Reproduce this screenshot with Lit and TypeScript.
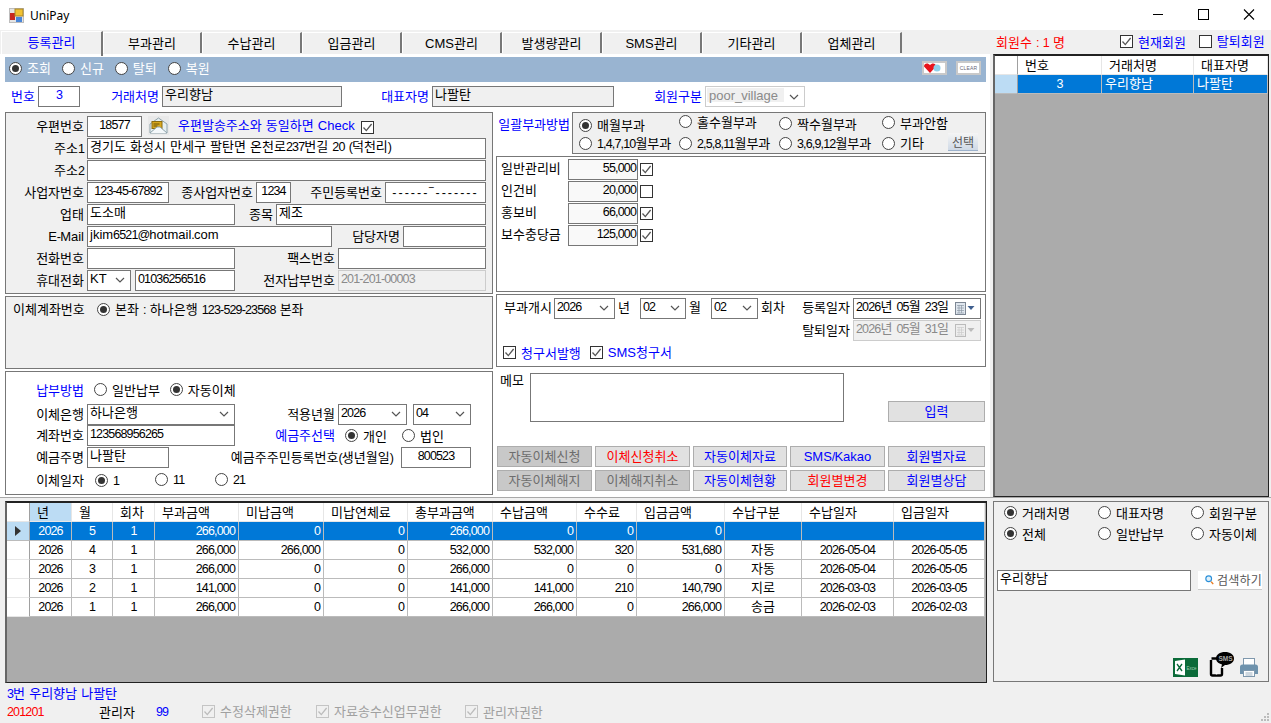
import { LitElement, html, css, svg } from 'lit';
import { customElement } from 'lit/decorators.js';

// hangul stays in the base font, digits and latin get their own run so widths follow the bitmap font of the original
const t = (s: string) => {
  const parts = s.match(/[\uAC00-\uD7A3]+|[A-Za-z]+|[^\uAC00-\uD7A3A-Za-z]+/g) || [];
  return parts.map(p => {
    if (/^[\uAC00-\uD7A3]/.test(p)) return html`${p}`;
    if (/^[A-Za-z]/.test(p)) return html`<span class="l">${p}</span>`;
    return html`<span class="n">${p}</span>`;
  });
};

const radio = (label: string, on = false, cls = '') => html`
  <span class="ra ${cls}"><i class="dot ${on ? 'on' : ''}"></i><span>${t(label)}</span></span>`;

const tick = svg`<svg width="11" height="11" viewBox="0 0 11 11"><path d="M1.5 5.5 4.3 8.6 9.6 2" fill="none" stroke="currentColor" stroke-width="1.3"/></svg>`;

const check = (label: string, on = true, cls = '') => html`
  <span class="cb ${cls}"><i class="box">${on ? tick : ''}</i>${label ? html`<span>${t(label)}</span>` : ''}</span>`;

const chevron = svg`<svg class="chev" width="10" height="6" viewBox="0 0 10 6"><path d="M1 1 5 5 9 1" fill="none" stroke="#555" stroke-width="1.2"/></svg>`;

const field = (v = '', cls = '') => html`<div class="in ${cls}">${t(v)}</div>`;
const sel = (v = '', cls = '') => html`<div class="in sel ${cls}"><span>${t(v)}</span>${chevron}</div>`;
const lab = (v: string, cls = '') => html`<div class="lb ${cls}">${t(v)}</div>`;

const calendar = (off = false) => svg`<svg class="cal" width="20" height="13" viewBox="0 0 20 13">
  <rect x="0.5" y="0.5" width="10" height="12" fill="${off ? '#eee' : '#dfe6ee'}" stroke="${off ? '#bbb' : '#7d8794'}"/>
  <path d="M2 3.5h7M2 6h7M2 8.500h7M2 11h7M4 3v8M6.500 3v8" stroke="${off ? '#ccc' : '#8e99a6'}" stroke-width=".7"/>
  <path d="M12.500 4h7l-3.500 4z" fill="${off ? '#bbb' : '#3f5f8f'}"/></svg>`;

const TABS = ['등록관리', '부과관리', '수납관리', '입금관리', 'CMS관리', '발생량관리', 'SMS관리', '기타관리', '업체관리'];
const FEES: [string, string, boolean][] = [
  ['일반관리비', '55,000', true],
  ['인건비', '20,000', false],
  ['홍보비', '66,000', true],
  ['보수충당금', '125,000', true],
];
const BUTTONS = [
  ['자동이체신청', 'off'], ['이체신청취소', 'red'], ['자동이체자료', ''], ['SMS/Kakao', ''], ['회원별자료', ''],
  ['자동이체해지', 'off'], ['이체해지취소', 'off'], ['자동이체현황', ''], ['회원별변경', 'red'], ['회원별상담', ''],
];
const HEAD = ['년', '월', '회차', '부과금액', '미납금액', '미납연체료', '총부과금액', '수납금액', '수수료', '입금금액', '수납구분', '수납일자', '입금일자'];
const ROWS = [
  ['2026', '5', '1', '266,000', '0', '0', '266,000', '0', '0', '0', '', '', ''],
  ['2026', '4', '1', '266,000', '266,000', '0', '532,000', '532,000', '320', '531,680', '자동', '2026-05-04', '2026-05-05'],
  ['2026', '3', '1', '266,000', '0', '0', '266,000', '0', '0', '0', '자동', '2026-05-04', '2026-05-05'],
  ['2026', '2', '1', '141,000', '0', '0', '141,000', '141,000', '210', '140,790', '지로', '2026-03-03', '2026-03-05'],
  ['2026', '1', '1', '266,000', '0', '0', '266,000', '266,000', '0', '266,000', '송금', '2026-02-03', '2026-02-03'],
];
const CENTERED = [0, 1, 2, 10, 11, 12];

@customElement('app-root')
export class AppRoot extends LitElement {
  static styles = css`
    :host {
      display: block;
      position: relative;
      width: 1271px;
      height: 723px;
      overflow: hidden;
      background: #f0f0f0;
      color: #000;
      font: 13px/18px "Noto Sans CJK KR", sans-serif;
      white-space: nowrap;
      word-spacing: 1.5px;
    }
    i { display: block; font-style: normal; }
    .n { font-family: "Liberation Sans", sans-serif; font-size: 12.5px; letter-spacing: -0.85px; }
    .l { font-family: "Liberation Sans", sans-serif; font-size: 13px; }
    .blue { color: #0000ff; }
    .red { color: #ff0000; }

    /* title bar */
    .title { height: 30px; background: #fff; display: flex; align-items: center; padding-left: 9px; }
    .title .name { font: 12px "Noto Sans", sans-serif; margin-left: 6px; }
    .winbtns { margin-left: auto; display: flex; }
    .winbtns svg { display: block; width: 45px; height: 30px; }

    /* tabs */
    .tabbar { height: 24px; display: flex; padding-left: 1px; position: relative; }
    .tab {
      width: 100px; height: 21px; margin-top: 2px; box-sizing: border-box;
      border-top: 1px solid #fff; border-left: 1px solid #fff; border-right: 2px solid #777;
      text-align: center; line-height: 20px;
    }
    .tab.first { width: 102px; height: 25px; margin-top: 1px; color: #0000ff; z-index: 1; }
    .tab.second { width: 99px; }
    .members { margin-left: 94px; display: flex; align-items: center; height: 24px; }
    .members .cnt { width: 124px; }
    .members .gone { margin-left: 13px; }

    .main { display: flex; height: 443px; }
    .page { width: 990px; box-sizing: border-box; background: #fff; padding: 3px 0 0 5px; }

    .modebar { width: 981px; height: 25px; background: #99b4d1; color: #fff; display: flex; align-items: center; padding: 0 0 3px 4px; box-sizing: border-box; }
    .modebar .ra { margin-right: 11px; }
    .modebar .imgs { margin-left: auto; display: flex; gap: 9px; padding-right: 5px; }
    .imgbtn { width: 25px; height: 14px; box-sizing: border-box; border: 2px solid #c9c9c9; background: #fff; display: grid; place-items: center; }
    .imgbtn span { font: 5px "Liberation Sans", sans-serif; color: #667; word-spacing: 0; letter-spacing: .2px; }

    .in {
      box-sizing: border-box; height: 21px; border: 1px solid #777; background: #fff;
      padding: 0 2px; line-height: 14px;
    }
    .in.gray { background: #f0f0f0; }
    .in.soft { background: #f9f9f9; }
    .in.off { background: #f0f0f0; border-color: #ccc; color: #8a8a8a; }
    .in.ctr { text-align: center; }
    .in.rt { text-align: right; padding-right: 1px; }
    .in.dash { line-height: 17px; }
    .in.dash .n { letter-spacing: 2px; }
    .sel { display: flex; justify-content: space-between; align-items: flex-start; padding-right: 5px; }
    .chev { margin-top: 6px; flex: none; }
    .sel.pv { color: #8a8a8a; background: #fff; border-color: #ccc; padding: 1px 5px 0 1px; }
    .sel.pv > span { background: #f0f0f0; width: 77px; padding-left: 2px; height: 14px; line-height: 13px; box-sizing: border-box; }

    .lb { text-align: right; padding-right: 3px; line-height: 19px; }
    .lb.pad8 { padding-right: 8px; }

    .ra, .cb { display: inline-flex; align-items: center; gap: 5px; line-height: 18px; }
    .dot {
      width: 13px; height: 13px; box-sizing: border-box; border: 1px solid #444; border-radius: 50%;
      background: #fff; display: grid; place-items: center; flex: none;
    }
    .dot.on::after { content: ''; width: 7px; height: 7px; border-radius: 50%; background: #333; }
    .box {
      width: 13px; height: 13px; box-sizing: border-box; border: 1px solid #333; background: #fff;
      color: #555; display: grid; place-items: center; flex: none;
    }
    .box svg { display: block; }
    .cb.dis { color: #a0a0a0; }
    .cb.dis .box { border-color: #c4c4c4; color: #bbb; background: #f0f0f0; }

    .rowtop {
      display: grid; margin-top: 4px; height: 21px;
      grid-template-columns: 33px 42px 82px 180px 90px 182px 91px 100px;
    }
    .lb.lc { color: #0000ff; }

    .cols { display: flex; gap: 3px; margin-top: 5px; }
    .left { width: 488px; display: flex; flex-direction: column; gap: 2px; }
    .right { width: 490px; display: flex; flex-direction: column; }
    .frame { border: 1px solid #777; box-sizing: border-box; }

    /* address box */
    .addr { height: 182px; background: #f0f0f0; padding-top: 3px; }
    .fr { display: grid; height: 21px; margin-bottom: 1px; }
    .fr.c-a { grid-template-columns: 81px 399px; }
    .fr.c-p { display: flex; }
    .fr.c-p .lb { width: 81px; box-sizing: border-box; }
    .fr.c-p .in { width: 55px; }
    .post { margin: 0 0 0 6px; }
    .post-note { color: #0000ff; margin-left: 9px; line-height: 17px; }
    .post-check { margin-left: 6px; margin-top: 3px; align-self: flex-start; }
    .fr.c-biz { grid-template-columns: 81px 82px 87px 35px 94px 101px; }
    .fr.c-type { grid-template-columns: 81px 148px 41px 210px; }
    .fr.c-mail { grid-template-columns: 81px 245px 71px 83px; }
    .fr.c-tel { grid-template-columns: 81px 148px 103px 148px; }
    .fr.c-hp { grid-template-columns: 81px 44px 104px 103px 148px; }
    .hp-num { margin-left: 4px; }

    /* account box */
    .acct { height: 73px; background: #f0f0f0; padding: 2px 0 0 7px; display: flex; align-items: flex-start; }
    .acct > div { width: 84px; line-height: 20px; }
    .acct .ra { height: 20px; }

    /* payment box */
    .pay { height: 124px; background: #fff; padding-top: 7px; }
    .pay .fr { margin-bottom: 0; }
    .pay .fr.c-m { margin-bottom: 4px; }
    .fr.c-m { display: flex; align-items: center; }
    .fr.c-m .lb { width: 81px; box-sizing: border-box; color: #0000ff; }
    .fr.c-m .ra { margin-left: 7px; }
    .fr.c-m .ra + .ra { margin-left: 10px; }
    .fr.c-bank { grid-template-columns: 81px 148px 103px 69px 64px; }
    .fr.c-bank .last { padding-left: 6px; }
    .fr.c-own { grid-template-columns: 81px 148px 103px auto; }
    .own { display: flex; align-items: center; padding-left: 7px; }
    .own .ra + .ra { margin-left: 15px; }
    .fr.c-hold { grid-template-columns: 81px 82px 232px 70px; margin-top: 1px; }
    .fr.c-day { display: flex; align-items: center; margin-top: 1px; }
    .fr.c-day .lb { width: 81px; box-sizing: border-box; }
    .day { width: 60px; margin-left: 8px; }
    .day + .day { margin-left: 0; }

    /* billing method */
    .method-row { display: flex; height: 42px; margin-bottom: 2px; }
    .method-row > .lb { width: 76px; box-sizing: border-box; color: #0000ff; line-height: 24px; padding-right: 2px; }
    .method {
      width: 414px; background: #f0f0f0; padding: 2px 0 0 6px; display: grid;
      grid-template-columns: 100px 100px 103px 96px; grid-auto-rows: 19px; align-items: center;
    }
    .method .up2 { margin-bottom: 4px; }
    .method .up1 { margin-bottom: 2px; }
    .method .lastcell { display: flex; justify-content: space-between; align-self: start; }
    .sbtn {
      width: 30px; height: 18px; box-sizing: border-box; margin-top: -1px;
      background: linear-gradient(#f5f5f5, #cfd9e6); border-bottom: 1px solid #9db2cc;
      color: #555; text-align: center; line-height: 17px; font-size: 12px;
    }

    /* fees */
    .fees { height: 136px; background: #fff; padding: 2px 0 0 4px; }
    .fee { display: grid; grid-template-columns: 67px 70px 15px; height: 21px; margin-bottom: 1px; align-items: start; }
    .fee > div:first-child { line-height: 18px; }
    .fee .cb { justify-content: flex-end; margin-top: 4px; }

    /* billing start */
    .start { height: 73px; margin-top: 2px; background: #fff; padding: 3px 0 0 7px; }
    .st1 { display: grid; grid-template-columns: 50px 61px 25px 46px 25px 47px 44px 51px 128px; height: 21px; }
    .st1 .tx { line-height: 18px; padding-left: 3px; }
    .st1 .first { padding-left: 0; line-height: 18px; }
    .st1 .lb { line-height: 18px; }
    .st2 { display: flex; justify-content: flex-end; height: 21px; margin-top: 1px; padding-right: 4px; }
    .date { width: 128px; display: flex; justify-content: space-between; padding-right: 5px; }
    .cal { margin-top: 3px; flex: none; }
    .st3 { display: flex; margin: 2px 0 0 -1px; color: #0000ff; gap: 9px; }

    /* memo and buttons */
    .memo { display: flex; height: 49px; margin-top: 6px; padding-left: 4px; }
    .memo .mm { width: 30px; line-height: 14px; }
    .memo .area { width: 314px; box-sizing: border-box; border: 1px solid #777; background: #fff; }
    .btn {
      height: 21px; box-sizing: border-box; border: 1px solid #adadad; background: #e1e1e1;
      color: #0000ff; text-align: center; line-height: 17px;
    }
    .btn.off { background: #c8c8c8; color: #6d6d6d; }
    .btn.red { color: #ff0000; }
    .memo .btn { width: 97px; margin-left: 44px; align-self: flex-end; }
    .btns { display: grid; grid-template-columns: 95px 95px 94px 95px 97px; gap: 3px; margin: 24px 0 0 1px; }

    /* data grids */
    .dg { background: #ababab; box-sizing: border-box; border: solid #222; border-width: 2px 1px 1px 2px; border-left-color: #666; }
    .side { width: 276px; height: 443px; margin-left: 3px; }
    .dr { display: grid; height: 19px; }
    .side .dr { grid-template-columns: 23px 84px 92px 74px; }
    .bottom-grid .dr { grid-template-columns: 23px 42px 41px 42px 84px 85px 84px 85px 84px 60px 88px 77px 92px 91px; }
    .dc {
      box-sizing: border-box; background: #fff; border-right: 1px solid #bbb; border-bottom: 1px solid #bbb;
      padding: 0 3px; line-height: 15px;
    }
    .dc.r { text-align: right; }
    .dc.c { text-align: center; }
    .dc.h { border-color: #e6e6e6; padding-left: 7px; line-height: 17px; }
    .dc.rh { border-bottom-color: #e6e6e6; border-right-color: #a0a0a0; padding: 0; display: grid; place-items: center; }
    .dc.hl { background: #bcdcf4; }
    .dc.hl.rh { border-bottom-color: #bbb; }
    .dr.cur .dc:not(.rh) { background: #0078d7; color: #fff; }

    .bottom { display: flex; height: 186px; padding-top: 3px; box-sizing: border-box; border-top: 1px solid #a8a8a8; }
    .bottom-grid { width: 982px; height: 182px; margin-left: 5px; }
    .finder { width: 276px; height: 181px; margin-left: 6px; background: #f0f0f0; padding: 0 0 0 10px; }
    .opts { display: grid; grid-template-columns: 94px 93px auto; grid-auto-rows: 21px; align-items: center; }
    .search { display: flex; margin: 26px 0 0 -7px; align-items: flex-start; }
    .search .in { width: 194px; }
    .go {
      width: 64px; height: 19px; margin: 1px 0 0 7px; box-sizing: border-box; background: #fff; border-bottom: 1px solid #ccc;
      display: flex; align-items: center; gap: 3px; padding-left: 7px; color: #555; font-size: 12px; letter-spacing: .2px;
    }
    .tools { display: flex; align-items: flex-end; margin: 61px 0 0 169px; }
    .tools svg { display: block; }
    .tools .ph { margin-left: 11px; }
    .tools .pr { margin-left: 5px; }

    .foot { padding-left: 7px; }
    .foot .f1 { color: #0000ff; height: 19px; line-height: 19px; }
    .foot .f2 { display: flex; height: 19px; align-items: center; }
    .foot .a { width: 92px; color: #ff0000; }
    .foot .b { width: 57px; }
    .foot .c { width: 46px; color: #0000ff; }
    .foot .d { width: 114px; }
    .foot .e { width: 149px; }
    .grip { position: absolute; right: 1px; bottom: 1px; display: block; }
  `;

  private winButtons() {
    return html`<div class="winbtns">
      <svg viewBox="0 0 45 30"><path d="M17 14.500h10" stroke="#000"/></svg>
      <svg viewBox="0 0 45 30"><rect x="17.500" y="9.500" width="10" height="10" fill="none" stroke="#000"/></svg>
      <svg viewBox="0 0 45 30"><path d="M18 9.500l10 10M28 9.500l-10 10" stroke="#000" stroke-width="1.100"/></svg>
    </div>`;
  }

  private addressBox() {
    return html`<div class="frame addr">
      <div class="fr c-p">
        ${lab('우편번호')}${field('18577', 'ctr')}
        <svg class="post" width="21" height="19" viewBox="0 0 21 19">
          <rect width="21" height="19" fill="#e9e9e9"/>
          <path d="M2 8 10.500 2 19 8v9H2z" fill="#e6eff2" stroke="#8fa3ab"/>
          <rect x="4" y="5.500" width="10" height="7" fill="#d8a81e" stroke="#8a6b10"/>
          <path d="M5.500 8h6M5.500 10h4" stroke="#6b5208"/>
          <path d="M2 17 9 11h3l7 6" fill="#f4f8fa" stroke="#8fa3ab"/>
        </svg>
        <span class="post-note">${t('우편발송주소와 동일하면 Check')}</span>
        <span class="post-check">${check('')}</span>
      </div>
      <div class="fr c-a">${lab('주소1')}${field('경기도 화성시 만세구 팔탄면 온천로237번길 20 (덕천리)')}</div>
      <div class="fr c-a">${lab('주소2')}${field()}</div>
      <div class="fr c-biz">${lab('사업자번호')}${field('123-45-67892', 'ctr')}${lab('종사업자번호')}${field('1234', 'ctr')}${lab('주민등록번호')}${field('------‾-------', 'ctr dash')}</div>
      <div class="fr c-type">${lab('업태')}${field('도소매')}${lab('종목')}${field('제조')}</div>
      <div class="fr c-mail">${lab('E-Mail')}${field('jkim6521@hotmail.com')}${lab('담당자명')}${field()}</div>
      <div class="fr c-tel">${lab('전화번호')}${field()}${lab('팩스번호')}${field()}</div>
      <div class="fr c-hp">${lab('휴대전화')}${sel('KT')}${field('01036256516', 'hp-num')}${lab('전자납부번호')}${field('201-201-00003', 'off')}</div>
    </div>`;
  }

  private payBox() {
    return html`<div class="frame pay">
      <div class="fr c-m">${lab('납부방법')}${radio('일반납부')}${radio('자동이체', true)}</div>
      <div class="fr c-bank">${lab('이체은행')}${sel('하나은행')}${lab('적용년월')}${sel('2026')}<div class="last">${sel('04')}</div></div>
      <div class="fr c-own">${lab('계좌번호')}${field('123568956265')}${lab('예금주선택', 'lc')}
        <div class="own">${radio('개인', true)}${radio('법인')}</div></div>
      <div class="fr c-hold">${lab('예금주명')}${field('나팔탄')}${lab('예금주주민등록번호(생년월일)', 'pad8')}${field('800523', 'ctr')}</div>
      <div class="fr c-day">${lab('이체일자')}
        <div class="day">${radio('1', true)}</div><div class="day">${radio('11')}</div><div class="day">${radio('21')}</div></div>
    </div>`;
  }

  private billingBoxes() {
    return html`
      <div class="method-row">
        ${lab('일괄부과방법')}
        <div class="frame method">
          <span>${radio('매월부과', true)}</span>
          <span class="up2">${radio('홀수월부과')}</span>
          <span>${radio('짝수월부과')}</span>
          <span class="up1">${radio('부과안함')}</span>
          <span>${radio('1,4,7,10월부과')}</span>
          <span>${radio('2,5,8,11월부과')}</span>
          <span>${radio('3,6,9,12월부과')}</span>
          <span class="lastcell">${radio('기타')}<div class="sbtn">선택</div></span>
        </div>
      </div>
      <div class="frame fees">
        ${FEES.map(f => html`<div class="fee"><div>${t(f[0])}</div>${field(f[1], 'rt soft')}${check('', f[2])}</div>`)}
      </div>
      <div class="frame start">
        <div class="st1">
          <div class="first">${t('부과개시')}</div>${sel('2026')}
          <div class="tx">년</div>${sel('02')}
          <div class="tx">월</div>${sel('02')}
          <div class="tx">회차</div>${lab('등록일자')}
          <div class="in date"><span>${t('2026년 05월 23일')}</span>${calendar()}</div>
        </div>
        <div class="st2">${lab('탈퇴일자')}<div class="in off date"><span>${t('2026년 05월 31일')}</span>${calendar(true)}</div></div>
        <div class="st3">${check('청구서발행')}${check('SMS청구서')}</div>
      </div>
      <div class="memo">
        <div class="mm">메모</div><div class="area"></div>
        <div class="btn">입력</div>
      </div>
      <div class="btns">${BUTTONS.map(b => html`<div class="btn ${b[1]}">${t(b[0])}</div>`)}</div>`;
  }

  private sideGrid() {
    return html`<div class="dg side">
      <div class="dr"><div class="dc h rh"></div>${['번호', '거래처명', '대표자명'].map(h => html`<div class="dc h">${h}</div>`)}</div>
      <div class="dr cur"><div class="dc rh hl"></div><div class="dc c">${t('3')}</div><div class="dc">우리향남</div><div class="dc">나팔탄</div></div>
    </div>`;
  }

  private mainGrid() {
    return html`<div class="dg bottom-grid">
      <div class="dr"><div class="dc h rh"></div>${HEAD.map((h, i) => html`<div class="dc h ${i === 0 ? 'hl' : ''}">${h}</div>`)}</div>
      ${ROWS.map((r, n) => html`<div class="dr ${n === 0 ? 'cur' : ''}">
        <div class="dc rh ${n === 0 ? 'hl' : ''}">${n === 0 ? html`<svg width="6" height="10" viewBox="0 0 6 10"><path d="M0 0 6 5 0 10z" fill="#333"/></svg>` : ''}</div>
        ${r.map((v, i) => html`<div class="dc ${CENTERED.includes(i) ? 'c' : 'r'}">${t(v)}</div>`)}
      </div>`)}
    </div>`;
  }

  private finder() {
    return html`<div class="frame finder">
      <div class="opts">
        ${radio('거래처명', true)}${radio('대표자명')}${radio('회원구분')}
        ${radio('전체', true)}${radio('일반납부')}${radio('자동이체')}
      </div>
      <div class="search">
        ${field('우리향남')}
        <div class="go">
          <svg width="11" height="12" viewBox="0 0 11 12"><circle cx="4.500" cy="4.500" r="3.500" fill="#dff0fb" stroke="#2a8fd8" stroke-width="1.400"/><path d="M7.500 8l2.500 3" stroke="#e8791c" stroke-width="1.800"/></svg>
          <span>검색하기</span>
        </div>
      </div>
      <div class="tools">
        <svg width="25" height="19" viewBox="0 0 25 19">
          <rect width="25" height="19" fill="#0b6b39"/>
          <path d="M2 3 12 1.500v16L2 16z" fill="#fff"/>
          <path d="M4 6l5 7M9 6l-5 7" stroke="#0b6b39" stroke-width="1.300"/>
          <text x="13.500" y="12" font-size="4.500" fill="#9fd0b4" font-family="Liberation Sans">Exce</text>
        </svg>
        <svg class="ph" width="25" height="25" viewBox="0 0 25 25">
          <path d="M2.500 6.500h6M13 16v6a1.500 1.500 0 0 1-1.500 1.500h-8A1.500 1.500 0 0 1 2 22V8" fill="none" stroke="#000" stroke-width="2.400"/>
          <circle cx="7.500" cy="21.500" r="1" fill="#fff"/>
          <path d="M16 0c5 0 9 2.500 9 6.500S21 13 16 13l-4 3 1-3.500C9.500 11.500 7 9.500 7 6.500 7 2.500 11 0 16 0z" fill="#000"/>
          <text x="9.500" y="9" font-size="6.500" fill="#aaa" font-family="Liberation Sans" font-weight="bold">SMS</text>
        </svg>
        <svg class="pr" width="20" height="19" viewBox="0 0 20 19">
          <rect x="4.500" y="0.500" width="11" height="7" fill="#fff" stroke="#7f98ad"/>
          <path d="M1 9a2.500 2.500 0 0 1 2.500-2.500h13A2.500 2.500 0 0 1 19 9v7h-3.500v-3h-11v3H1z" fill="#6f93ad"/>
          <rect x="4.500" y="12.500" width="11" height="6" fill="#fff" stroke="#7f98ad"/>
          <path d="M6.500 15h7M6.500 17h7" stroke="#9db0c0"/>
        </svg>
      </div>
    </div>`;
  }

  render() {
    return html`
      <div class="title">
        <svg width="15" height="15" viewBox="0 0 15 15">
          <rect x="0.500" y="0.500" width="14" height="14" fill="#e4e4e4" stroke="#bdbdbd"/>
          <rect x="1" y="5" width="5" height="7" fill="#c8281e"/>
          <rect x="6" y="1" width="8" height="7" fill="#f1c232" stroke="#a8862a"/>
          <rect x="7" y="9" width="6" height="5" fill="#4a86d8"/>
        </svg>
        <span class="name">UniPay</span>
        ${this.winButtons()}
      </div>
      <div class="tabbar">
        ${TABS.map((n, i) => html`<div class="tab ${i === 0 ? 'first' : i === 1 ? 'second' : ''}">${t(n)}</div>`)}
        <div class="members">
          <span class="cnt red">${t('회원수 : 1 명')}</span>
          <span class="blue">${check('현재회원')}</span>
          <span class="blue gone">${check('탈퇴회원', false)}</span>
        </div>
      </div>
      <div class="main">
        <div class="page">
          <div class="modebar">
            ${radio('조회', true)}${radio('신규')}${radio('탈퇴')}${radio('복원')}
            <div class="imgs">
              <div class="imgbtn"><svg width="21" height="10" viewBox="0 0 21 10"><path d="M6 10 0 3.500C0 0 4 -.5 6 2c2-2.500 6-2 6 1.500z" fill="#e8141c"/><circle cx="13" cy="5" r="3.500" fill="#8fd0ea"/></svg></div>
              <div class="imgbtn"><span>CLEAR</span></div>
            </div>
          </div>
          <div class="rowtop">
            ${lab('번호', 'lc')}${field('3', 'ctr blue')}
            ${lab('거래처명', 'lc')}${field('우리향남', 'gray')}
            ${lab('대표자명', 'lc')}${field('나팔탄', 'gray')}
            ${lab('회원구분', 'lc')}${sel('poor_village', 'pv')}
          </div>
          <div class="cols">
            <div class="left">
              ${this.addressBox()}
              <div class="frame acct"><div>이체계좌번호</div>${radio('본좌 : 하나은행 123-529-23568 본좌', true)}</div>
              ${this.payBox()}
            </div>
            <div class="right">${this.billingBoxes()}</div>
          </div>
        </div>
        ${this.sideGrid()}
      </div>
      <div class="bottom">
        ${this.mainGrid()}
        ${this.finder()}
      </div>
      <div class="foot">
        <div class="f1">${t('3번 우리향남 나팔탄')}</div>
        <div class="f2">
          <span class="a">${t('201201')}</span><span class="b">관리자</span><span class="c">${t('99')}</span>
          <span class="d">${check('수정삭제권한', true, 'dis')}</span>
          <span class="e">${check('자료송수신업무권한', true, 'dis')}</span>
          ${check('관리자권한', true, 'dis')}
        </div>
      </div>
      <svg class="grip" width="9" height="9" viewBox="0 0 9 9" fill="#bbb">
        <rect x="6" y="0" width="2" height="2"/><rect x="3" y="3" width="2" height="2"/><rect x="6" y="3" width="2" height="2"/>
        <rect x="0" y="6" width="2" height="2"/><rect x="3" y="6" width="2" height="2"/><rect x="6" y="6" width="2" height="2"/>
      </svg>
    `;
  }
}
